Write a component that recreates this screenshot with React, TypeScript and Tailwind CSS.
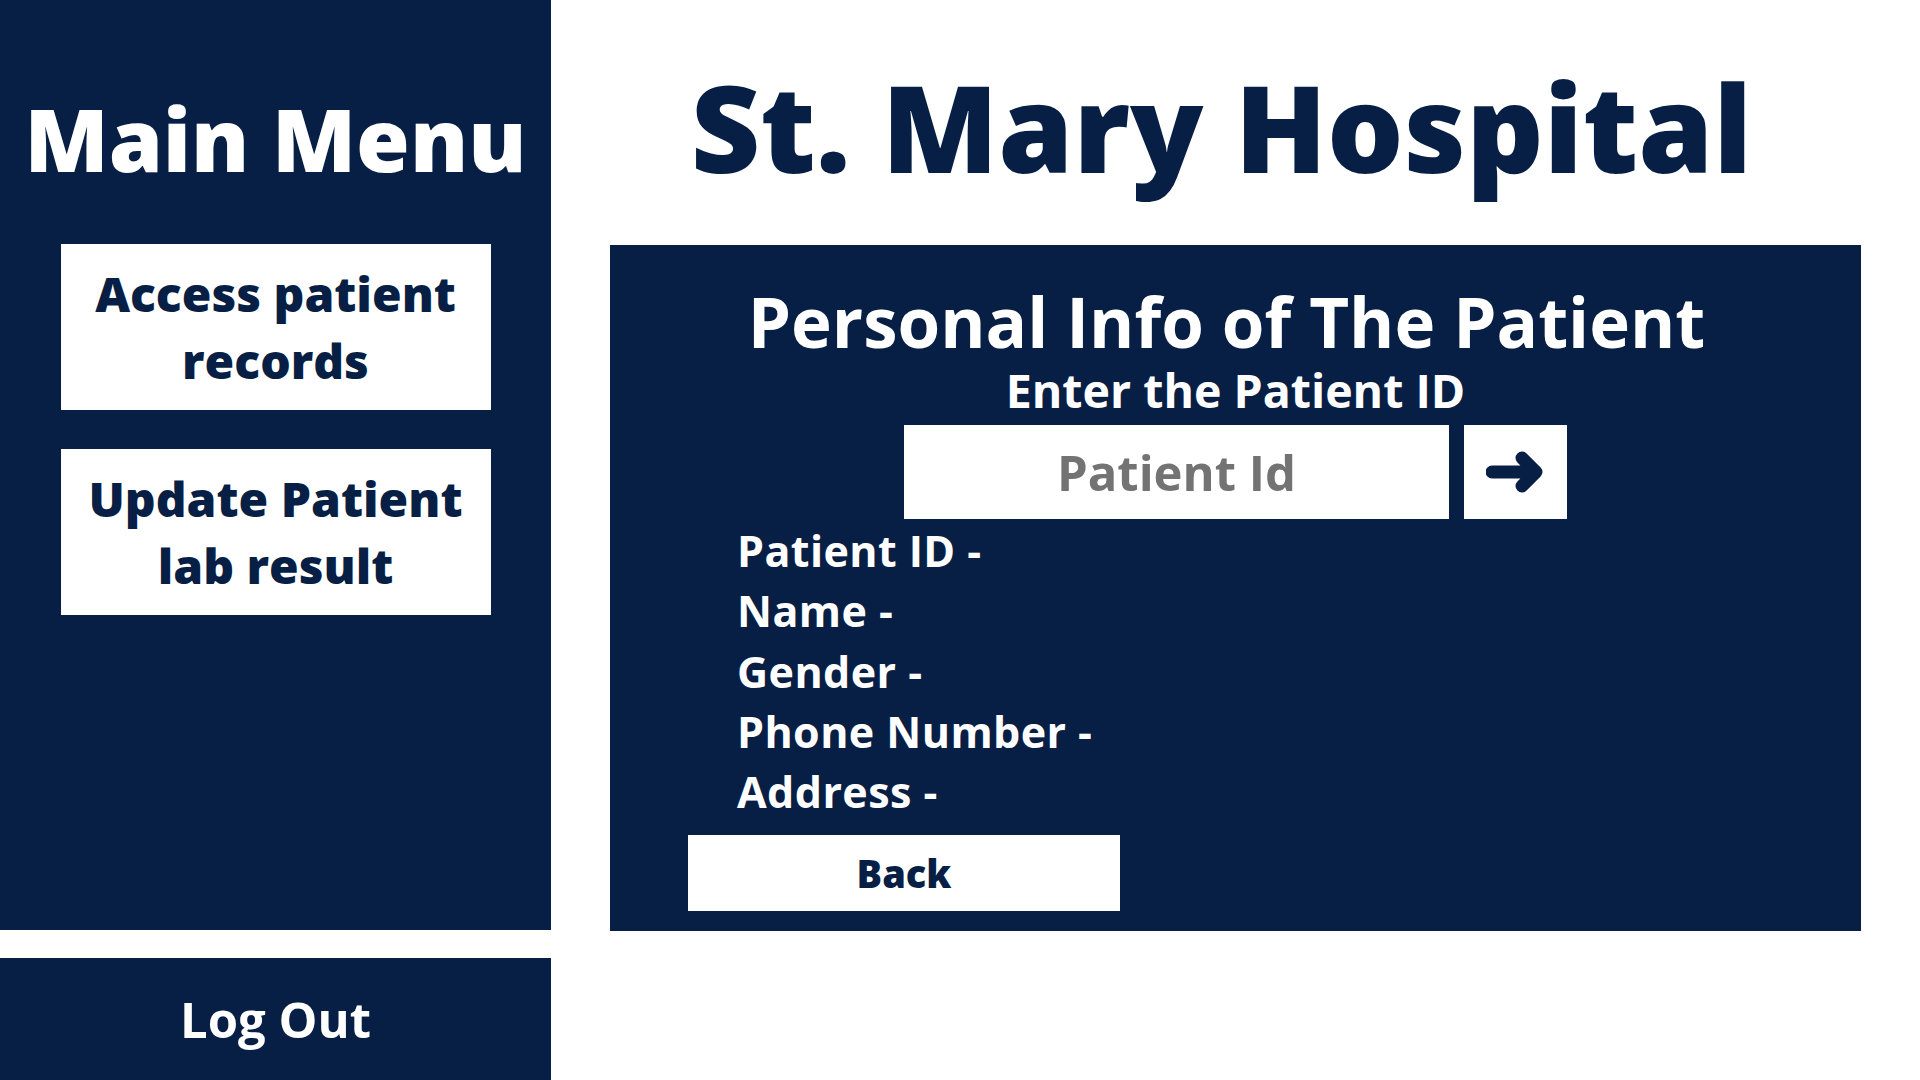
import React from "react";

const fields = ["Patient ID -", "Name -", "Gender -", "Phone Number -", "Address -"];

const ArrowIcon = () => (
  <svg width="60" height="46" viewBox="0 0 60 46" fill="none">
    <path
      d="M6 23H50M36 9L50 23L36 37"
      stroke="#081f45"
      strokeWidth="13"
      strokeLinecap="round"
      strokeLinejoin="round"
    />
  </svg>
);

const Sidebar = () => {
  return (
    <aside className="w-[551px] shrink-0 flex flex-col gap-[28px]">
      <div className="h-[930px] bg-[#081f45] flex flex-col items-center pt-[95px]">
        <h2 className="text-[87px] leading-none font-extrabold text-white">Main Menu</h2>
        <div className="mt-[62px] flex flex-col gap-[39px]">
          <button className="w-[430px] h-[166px] bg-white text-[#081f45] text-[48px] leading-[67px] font-extrabold">
            Access patient
            <br />
            records
          </button>
          <button className="w-[430px] h-[166px] bg-white text-[#081f45] text-[48px] leading-[67px] font-extrabold">
            Update Patient
            <br />
            lab result
          </button>
        </div>
      </div>
      <button className="flex-1 bg-[#081f45] flex items-center justify-center text-white text-[49px] leading-none font-bold">
        Log Out
      </button>
    </aside>
  );
};

const PatientPanel = () => {
  return (
    <section className="mx-[59px] mt-[58px] h-[686px] bg-[#081f45] flex flex-col pt-[42px]">
      <h2 className="text-center pr-[18px] text-white text-[69px] leading-none font-bold">
        Personal Info of The Patient
      </h2>
      <p className="mt-[11px] text-center text-white text-[46.5px] leading-none font-bold">
        Enter the Patient ID
      </p>
      <div className="mt-[12px] flex justify-center gap-[15px]">
        <input
          type="text"
          placeholder="Patient Id"
          className="w-[545px] h-[94px] bg-white text-center text-[49px] font-bold text-[#081f45] placeholder:text-[#737373] outline-none"
        />
        <button className="w-[103px] h-[94px] bg-white flex items-center justify-center">
          <ArrowIcon />
        </button>
      </div>
      <ul className="mt-[2px] pl-[127px] flex flex-col">
        {fields.map((f) => (
          <li key={f} className="text-white text-[43px] tracking-[0.01em] leading-[60.25px] font-bold">
            {f}
          </li>
        ))}
      </ul>
      <button className="mt-[13px] ml-[78px] w-[432px] h-[76px] bg-white text-[#081f45] text-[38px] leading-none font-extrabold">
        Back
      </button>
    </section>
  );
};

export default function App() {
  return (
    <div className="w-[1920px] h-[1080px] flex bg-white font-['Open_Sans',sans-serif] overflow-hidden">
      <Sidebar />
      <main className="flex-1 flex flex-col">
        <h1 className="pt-[66px] pr-[28px] text-center text-[#081f45] text-[120.5px] leading-none font-extrabold">
          St. Mary Hospital
        </h1>
        <PatientPanel />
      </main>
    </div>
  );
}
